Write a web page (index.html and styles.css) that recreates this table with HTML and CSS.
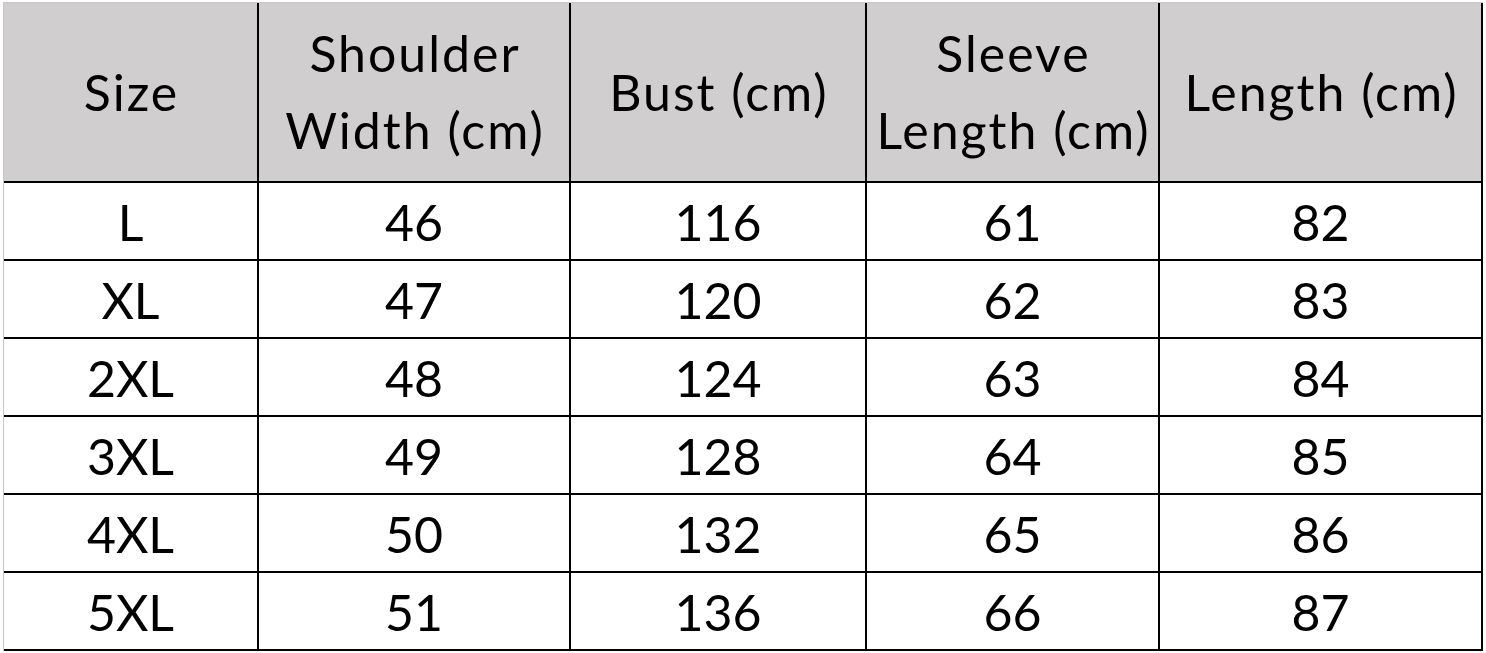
FILE: index.html
```html
<!DOCTYPE html>
<html lang="en">
<head>
<meta charset="utf-8">
<title>Size Chart</title>
<link rel="stylesheet" href="styles.css">
</head>
<body>
<div class="sheet">
  <div class="chart">
    <div class="cell head">Size</div>
    <div class="cell head">Shoulder<br>Width (cm)</div>
    <div class="cell head">Bust (cm)</div>
    <div class="cell head">Sleeve<br>Length (cm)</div>
    <div class="cell head">Length (cm)</div>

    <div class="cell">L</div><div class="cell">46</div><div class="cell">116</div><div class="cell">61</div><div class="cell">82</div>
    <div class="cell">XL</div><div class="cell">47</div><div class="cell">120</div><div class="cell">62</div><div class="cell">83</div>
    <div class="cell">2XL</div><div class="cell">48</div><div class="cell">124</div><div class="cell">63</div><div class="cell">84</div>
    <div class="cell">3XL</div><div class="cell">49</div><div class="cell">128</div><div class="cell">64</div><div class="cell">85</div>
    <div class="cell">4XL</div><div class="cell">50</div><div class="cell">132</div><div class="cell">65</div><div class="cell">86</div>
    <div class="cell">5XL</div><div class="cell">51</div><div class="cell">136</div><div class="cell">66</div><div class="cell">87</div>
  </div>
</div>
</body>
</html>
```

FILE: styles.css
```css
html, body {
  margin: 0;
  padding: 0;
  background: #ffffff;
}

.sheet {
  padding: 2px 0 0 3px;
}

.chart {
  display: grid;
  grid-template-columns: 255px 312px 296px 293px 323px;
  grid-template-rows: 180px repeat(6, 78px);
  width: max-content;
  border-left: 1px solid #c6c6c6;
  border-top: 1px solid #c6c6c6;
  font-family: "Lato", "Open Sans", sans-serif;
  font-size: 50px;
  color: #000000;
}

.cell {
  box-sizing: border-box;
  display: flex;
  align-items: center;
  justify-content: center;
  text-align: center;
  border-right: 2px solid #000000;
  border-bottom: 2px solid #000000;
  line-height: 78px;
  padding-top: 2px;
}

.head {
  background: #d0cece;
  line-height: 77px;
  letter-spacing: 2px;
  padding-top: 0;
  padding-left: 2px;
}
```
